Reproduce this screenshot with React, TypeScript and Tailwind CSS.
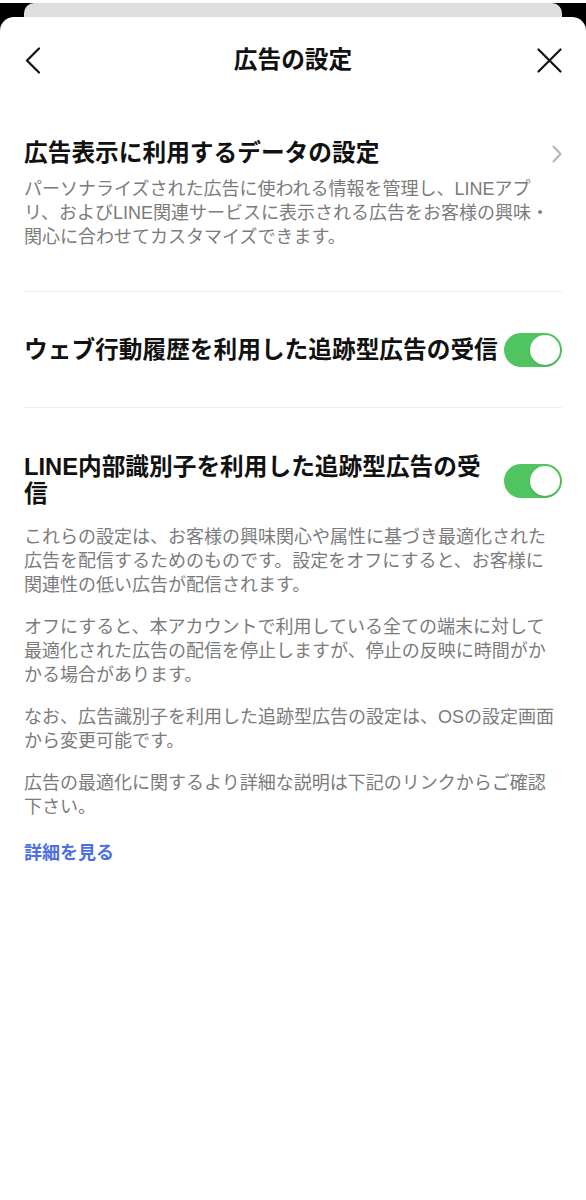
import * as React from "react";

const FONT = {
  fontFamily: '"Liberation Sans", "Noto Sans CJK JP", sans-serif',
};

const Toggle: React.FC<{ on?: boolean }> = ({ on = true }) => (
  <div
    className={`relative h-[34px] w-[58px] shrink-0 rounded-full ${
      on ? "bg-[#4fc460]" : "bg-[#e3e3e3]"
    }`}
  >
    <div
      className={`absolute top-[2px] h-[30px] w-[30px] rounded-full bg-white shadow-[0_1px_2px_rgba(0,0,0,0.15)] ${
        on ? "right-[2px]" : "left-[2px]"
      }`}
    />
  </div>
);

const Divider = () => <div className="mx-6 h-px bg-[#efefef]" />;

export default function App() {
  return (
    <div className="min-h-[1200px] bg-black" style={FONT}>
      {/* sheet stacked behind */}
      <div className="mx-6 mt-[3px] h-[14px] rounded-t-[10px] bg-[#dedede]" />

      <div className="min-h-[1183px] rounded-t-[14px] bg-white">
        <header className="flex h-[86px] items-center justify-between px-6">
          <button className="flex h-[26px] w-[26px] items-center" aria-label="戻る">
            <svg width="17" height="27" viewBox="0 0 17 27" fill="none">
              <path
                d="M15 1.5 3 13.5l12 12"
                stroke="#111"
                strokeWidth="2.2"
                strokeLinecap="round"
                strokeLinejoin="round"
              />
            </svg>
          </button>
          <h1 className="text-[23.7px] font-bold leading-[27px] text-[#111]">
            広告の設定
          </h1>
          <button className="flex h-[26px] w-[26px] items-center justify-end" aria-label="閉じる">
            <svg width="25" height="25" viewBox="0 0 25 25" fill="none">
              <path
                d="M1.5 1.5l22 22M23.5 1.5l-22 22"
                stroke="#111"
                strokeWidth="2.2"
                strokeLinecap="round"
              />
            </svg>
          </button>
        </header>

        {/* データの設定 */}
        <section className="px-6 pt-[37px] pb-[42px]">
          <div className="flex items-center justify-between">
            <h2 className="text-[23.7px] font-bold leading-[27px] text-[#111]">
              広告表示に利用するデータの設定
            </h2>
            <svg width="10" height="18" viewBox="0 0 10 18" fill="none">
              <path
                d="M1.5 1.5 8.5 9l-7 7.5"
                stroke="#b4b4b4"
                strokeWidth="2"
                strokeLinecap="round"
                strokeLinejoin="round"
              />
            </svg>
          </div>
          <p className="mt-[10px] text-[18px] leading-[24px] text-[#7b7b7b]">
            パーソナライズされた広告に使われる情報を管理し、LINEアプリ、およびLINE関連サービスに表示される広告をお客様の興味・関心に合わせてカスタマイズできます。
          </p>
        </section>

        <Divider />

        <section className="flex items-center gap-[4px] px-6 pt-[41px] pb-[40px]">
          <h2 className="flex-1 text-[23.7px] font-bold leading-[27px] text-[#111]">
            ウェブ行動履歴を利用した追跡型広告の受信
          </h2>
          <Toggle />
        </section>

        <Divider />

        <section className="px-6 pt-[46px] pb-10">
          <div className="flex items-center gap-[4px]">
            <h2 className="flex-1 text-[23.7px] font-bold leading-[27px] text-[#111]">
              LINE内部識別子を利用した追跡型広告の受信
            </h2>
            <Toggle />
          </div>
          <div className="mt-[17px] text-[18px] leading-[24px] text-[#7b7b7b]">
            <p>
              これらの設定は、お客様の興味関心や属性に基づき最適化された広告を配信するためのものです。設定をオフにすると、お客様に
              <br />
              関連性の低い広告が配信されます。
            </p>
            <p className="mt-[18px]">
              オフにすると、本アカウントで利用している全ての端末に対して最適化された広告の配信を停止しますが、停止の反映に時間がかかる場合があります。
            </p>
            <p className="mt-[18px]">
              なお、広告識別子を利用した追跡型広告の設定は、OSの設定画面から変更可能です。
            </p>
            <p className="mt-[18px]">
              広告の最適化に関するより詳細な説明は下記のリンクからご確認下さい。
            </p>
          </div>
          <a className="mt-[22px] block text-[18px] font-bold leading-[24px] text-[#4c6fe4]">
            詳細を見る
          </a>
        </section>
      </div>
    </div>
  );
}
